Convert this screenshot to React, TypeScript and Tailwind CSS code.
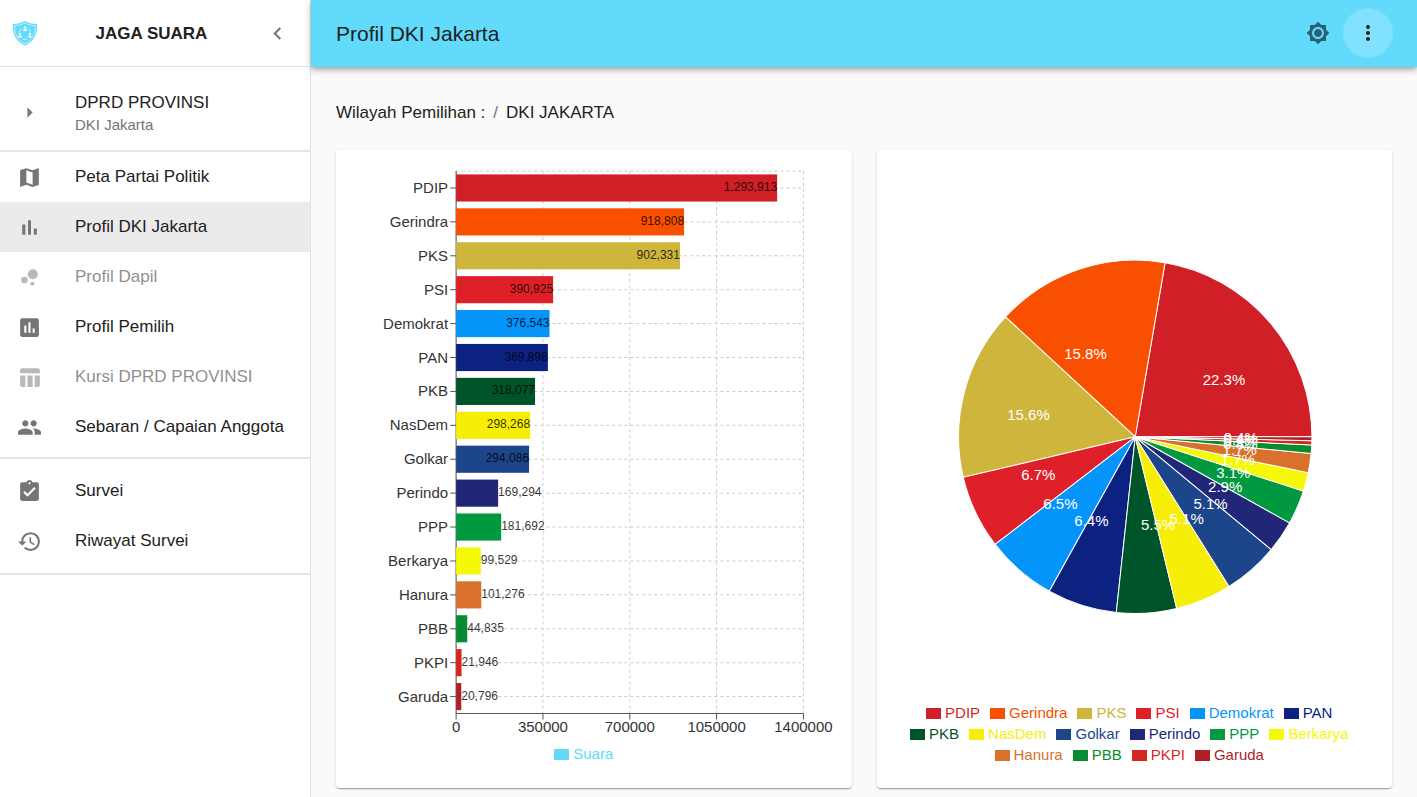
import type { ReactNode } from "react";
import {
  MdArrowRight,
  MdAssessment,
  MdAssignmentTurnedIn,
  MdBrightness7,
  MdBubbleChart,
  MdChevronLeft,
  MdGroup,
  MdHistory,
  MdMap,
  MdMoreVert,
  MdTableChart,
} from "react-icons/md";

type Party = { name: string; votes: number; color: string };

const parties: Party[] = [
  { name: "PDIP", votes: 1293913, color: "#d01f27" },
  { name: "Gerindra", votes: 918808, color: "#f94f00" },
  { name: "PKS", votes: 902331, color: "#ceb53c" },
  { name: "PSI", votes: 390925, color: "#df2029" },
  { name: "Demokrat", votes: 376543, color: "#0494fa" },
  { name: "PAN", votes: 369898, color: "#0c2280" },
  { name: "PKB", votes: 318077, color: "#005429" },
  { name: "NasDem", votes: 298268, color: "#f6ee07" },
  { name: "Golkar", votes: 294086, color: "#1c458a" },
  { name: "Perindo", votes: 169294, color: "#212676" },
  { name: "PPP", votes: 181692, color: "#00993f" },
  { name: "Berkarya", votes: 99529, color: "#f5f806" },
  { name: "Hanura", votes: 101276, color: "#d9702b" },
  { name: "PBB", votes: 44835, color: "#078d31" },
  { name: "PKPI", votes: 21946, color: "#d5271f" },
  { name: "Garuda", votes: 20796, color: "#ae1f26" },
];

function Logo() {
  return (
    <svg viewBox="0 0 26 26" className="h-[26px] w-[26px] shrink-0" aria-hidden="true">
      <path
        d="M13 1C10 3 5.500 4 .8 4C.8 14 3.500 21.500 13 25.500C22.500 21.500 25.200 14 25.200 4C20.500 4 16 3 13 1z"
        fill="#61dafb"
      />
      <path
        d="M13 2.900C10.200 4.600 6.500 5.500 2.600 5.600C2.800 14 5.100 20.300 13 23.800C20.900 20.300 23.200 14 23.400 5.600C19.500 5.500 15.800 4.600 13 2.900z"
        fill="none"
        stroke="#fff"
        strokeWidth="0.6"
      />
      <g fill="none" stroke="#fff" strokeWidth="0.7">
        <path d="M10.600 8.200C8.800 9.100 7.700 10.500 7.500 12.300M15.400 8.200C17.200 9.100 18.300 10.500 18.500 12.300M10.200 18.600C12 19.500 14 19.500 15.800 18.600" />
      </g>
      <g fill="#fff">
        <circle cx="13" cy="7.400" r="1.200" />
        <path d="M11.200 11V9.800L12.300 8.900H13.700L14.800 9.800V11z" />
        <circle cx="8" cy="14" r="1.200" />
        <path d="M6.200 17.600V16.400L7.300 15.500H8.700L9.800 16.400V17.600z" />
        <circle cx="18" cy="14" r="1.200" />
        <path d="M16.200 17.600V16.400L17.300 15.500H18.700L19.800 16.400V17.600z" />
      </g>
    </svg>
  );
}

type IconProps = { size?: number; className?: string };

function BarsIcon({ size = 24, className }: IconProps) {
  return (
    <svg viewBox="0 0 24 24" width={size} height={size} fill="currentColor" className={className} aria-hidden="true">
      <path d="M5 9.200h3V19H5zM10.600 5h2.800v14h-2.800zm5.600 8H19v6h-2.800z" />
    </svg>
  );
}

type NavItemProps = {
  icon: (props: IconProps) => ReactNode;
  label: string;
  active?: boolean;
  disabled?: boolean;
};

function NavItem({ icon: Icon, label, active, disabled }: NavItemProps) {
  return (
    <li className={active ? "bg-[#ebebeb]" : ""}>
      <a
        href="#"
        aria-current={active ? "page" : undefined}
        aria-disabled={disabled}
        className={`flex h-[50px] items-center pl-[17px] ${disabled ? "opacity-50" : ""}`}
      >
        <Icon size={25} className="mr-[33px] shrink-0 text-[#757575]" />
        <span>{label}</span>
      </a>
    </li>
  );
}

function Sidebar() {
  return (
    <aside className="w-[311px] shrink-0 border-r border-[#e0e0e0] bg-white text-[17px]">
      <div className="flex h-[67px] items-center border-b border-[#e2e2e2] pl-3 pr-5">
        <Logo />
        <h1 className="flex-1 pt-0.5 text-center font-bold">JAGA SUARA</h1>
        <button type="button" aria-label="Tutup menu" className="text-[#757575]">
          <MdChevronLeft size={25} />
        </button>
      </div>
      <nav>
        <div className="border-b-2 border-[#e4e4e4] pt-2">
          <button type="button" className="flex h-[75px] w-full items-center pl-[17px] text-left">
            <MdArrowRight size={25} className="mr-[33px] shrink-0 text-[#757575]" />
            <span className="pt-0.5">
              <span className="block leading-[22px]">DPRD PROVINSI</span>
              <span className="block text-[15px] leading-[21px] text-[#757575]">DKI Jakarta</span>
            </span>
          </button>
        </div>
        <ul className="border-b-2 border-[#e4e4e4] pb-[5px]">
          <NavItem icon={MdMap} label="Peta Partai Politik" />
          <NavItem icon={BarsIcon} label="Profil DKI Jakarta" active />
          <NavItem icon={MdBubbleChart} label="Profil Dapil" disabled />
          <NavItem icon={MdAssessment} label="Profil Pemilih" />
          <NavItem icon={MdTableChart} label="Kursi DPRD PROVINSI" disabled />
          <NavItem icon={MdGroup} label="Sebaran / Capaian Anggota" />
        </ul>
        <ul className="border-b-2 border-[#e4e4e4] pt-[7px] pb-[7px]">
          <NavItem icon={MdAssignmentTurnedIn} label="Survei" />
          <NavItem icon={MdHistory} label="Riwayat Survei" />
        </ul>
      </nav>
    </aside>
  );
}

const plot = { left: 120, top: 21, width: 347, height: 542 };
const maxVotes = 1400000;
const ticks = [0, 350000, 700000, 1050000, 1400000];

function VotesBarChart() {
  const band = plot.height / parties.length;
  const bottom = plot.top + plot.height;
  const right = plot.left + plot.width;
  const scaleX = (value: number) => plot.left + (value / maxVotes) * plot.width;
  const bandCenter = (i: number) => plot.top + band * (i + 0.5);

  return (
    <svg viewBox="0 0 515 592" className="block h-auto w-full" role="img" aria-label="Suara per partai">
      <g stroke="#ccc" strokeDasharray="3 3">
        <line x1={plot.left} x2={right} y1={plot.top} y2={plot.top} />
        {parties.map((p, i) => (
          <line key={p.name} x1={plot.left} x2={right} y1={bandCenter(i)} y2={bandCenter(i)} />
        ))}
        {ticks.map((t) => (
          <line key={t} x1={scaleX(t)} x2={scaleX(t)} y1={plot.top} y2={bottom} />
        ))}
      </g>
      <g stroke="#555">
        <line x1={plot.left} x2={plot.left} y1={plot.top} y2={bottom} />
        <line x1={plot.left} x2={right} y1={bottom} y2={bottom} />
        {ticks.map((t) => (
          <line key={t} x1={scaleX(t)} x2={scaleX(t)} y1={bottom} y2={bottom + 6} />
        ))}
        {parties.map((p, i) => (
          <line key={p.name} x1={plot.left - 6} x2={plot.left} y1={bandCenter(i)} y2={bandCenter(i)} />
        ))}
      </g>
      <g className="text-[15px]" fill="#333">
        {ticks.map((t) => (
          <text key={t} x={scaleX(t)} y={bottom + 18} textAnchor="middle">
            {t}
          </text>
        ))}
        {parties.map((p, i) => (
          <text key={p.name} x={plot.left - 8} y={bandCenter(i) + 5} textAnchor="end">
            {p.name}
          </text>
        ))}
      </g>
      {parties.map((p, i) => (
        <rect
          key={p.name}
          x={plot.left}
          y={bandCenter(i) - band * 0.4}
          width={scaleX(p.votes) - plot.left}
          height={band * 0.8}
          fill={p.color}
        />
      ))}
      <g className="text-[12px]" fill="#000" fillOpacity="0.8">
        {parties.map((p, i) => (
          <text
            key={p.name}
            x={scaleX(p.votes)}
            y={bandCenter(i) + 3}
            textAnchor={p.votes > 200000 ? "end" : "start"}
          >
            {p.votes.toLocaleString("en-US")}
          </text>
        ))}
      </g>
    </svg>
  );
}

const pie = { cx: 258, cy: 286.5, r: 176.5 };

function VotesPieChart() {
  const total = parties.reduce((sum, p) => sum + p.votes, 0);
  const point = (angle: number, radius: number) => ({
    x: pie.cx + radius * Math.cos(angle),
    y: pie.cy - radius * Math.sin(angle),
  });

  let counted = 0;
  const slices = parties.map((p) => {
    const start = (counted / total) * Math.PI * 2;
    counted += p.votes;
    const end = (counted / total) * Math.PI * 2;
    const a = point(start, pie.r);
    const b = point(end, pie.r);
    return {
      ...p,
      d: `M${pie.cx} ${pie.cy}L${a.x} ${a.y}A${pie.r} ${pie.r} 0 0 0 ${b.x} ${b.y}Z`,
      label: point((start + end) / 2, pie.r / 2),
    };
  });

  return (
    <svg viewBox="0 0 515 551" className="block h-auto w-full" role="img" aria-label="Persentase suara per partai">
      <g stroke="#fff">
        {slices.map((s) => (
          <path key={s.name} d={s.d} fill={s.color} />
        ))}
      </g>
      <g className="text-[15px]" fill="#fff">
        {slices.map((s) => (
          <text
            key={s.name}
            x={s.label.x}
            y={s.label.y}
            textAnchor={s.label.x > pie.cx ? "start" : "end"}
            dominantBaseline="central"
          >
            {((s.votes / total) * 100).toFixed(1)}%
          </text>
        ))}
      </g>
    </svg>
  );
}

function Legend({ items }: { items: { name: string; color: string }[] }) {
  return (
    <ul className="flex flex-wrap justify-center px-6 text-[15px] leading-[21px]">
      {items.map((item) => (
        <li key={item.name} className="mr-[10px] flex items-center" style={{ color: item.color }}>
          <span className="mr-1 mt-0.5 h-[11px] w-[15px] bg-current" />
          {item.name}
        </li>
      ))}
    </ul>
  );
}

function Card({ children }: { children: ReactNode }) {
  return (
    <section className="rounded bg-white pb-[23px] shadow-[0_2px_1px_-1px_rgba(0,0,0,0.2),0_1px_1px_0_rgba(0,0,0,0.14),0_1px_3px_0_rgba(0,0,0,0.12)]">
      {children}
    </section>
  );
}

export default function App() {
  return (
    <div className="flex min-h-screen bg-[#fafafa] font-['Liberation_Sans',Arial,sans-serif] text-[#212121]">
      <Sidebar />
      <div className="flex min-w-0 flex-1 flex-col">
        <header className="relative z-10 flex h-[67px] items-center bg-[#61dafb] pb-px pl-[25px] pr-6 shadow-[0_2px_4px_-1px_rgba(0,0,0,0.2),0_4px_5px_0_rgba(0,0,0,0.14),0_1px_10px_0_rgba(0,0,0,0.12)]">
          <h2 className="flex-1 pt-0.5 text-[21px]">Profil DKI Jakarta</h2>
          <button type="button" aria-label="Ganti tema" className="flex h-[50px] w-[50px] items-center justify-center text-black/55">
            <MdBrightness7 size={24} />
          </button>
          <button
            type="button"
            aria-label="Menu lainnya"
            className="flex h-[50px] w-[50px] items-center justify-center rounded-full bg-[#82e1fc]"
          >
            <MdMoreVert size={24} />
          </button>
        </header>
        <main className="px-[25px] pb-2">
          <nav aria-label="Wilayah" className="flex h-[83px] items-center pt-2 text-[17px]">
            <span>Wilayah Pemilihan :</span>
            <span className="mx-2 text-[#757575]">/</span>
            <span>DKI JAKARTA</span>
          </nav>
          <div className="grid grid-cols-2 gap-[25px]">
            <Card>
              <VotesBarChart />
              <div className="pr-[10px]">
                <Legend items={[{ name: "Suara", color: "#61dafb" }]} />
              </div>
            </Card>
            <Card>
              <VotesPieChart />
              <Legend items={parties} />
            </Card>
          </div>
        </main>
      </div>
    </div>
  );
}
